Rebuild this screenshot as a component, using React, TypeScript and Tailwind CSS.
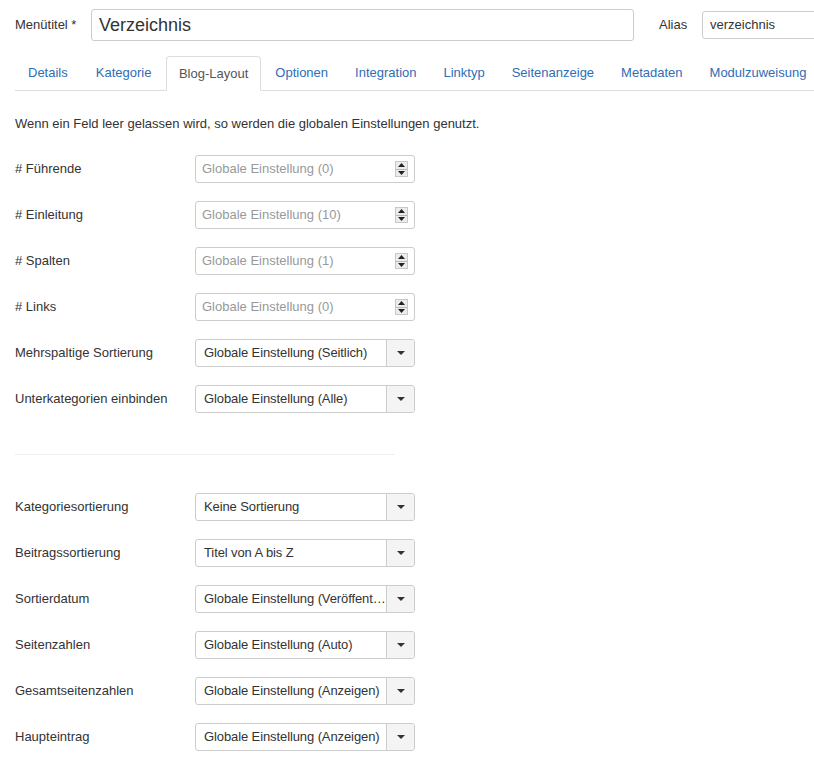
import React from "react";

const tabs = ["Details", "Kategorie", "Blog-Layout", "Optionen", "Integration", "Linktyp", "Seitenanzeige", "Metadaten", "Modulzuweisung"];

function Spinner() {
  return (
    <div className="flex flex-col w-[13px] h-[16px] border border-[#c8c8c8] bg-[#ececec] mr-[6px]">
      <div className="flex-1 flex items-center justify-center border-b border-[#b8b8b8]">
        <svg width="7" height="4" viewBox="0 0 7 4"><path d="M0 4 L3.5 0 L7 4 Z" fill="#222" /></svg>
      </div>
      <div className="flex-1 flex items-center justify-center">
        <svg width="7" height="4" viewBox="0 0 7 4"><path d="M0 0 L3.5 4 L7 0 Z" fill="#222" /></svg>
      </div>
    </div>
  );
}

function NumberField({ ph }: { ph: string }) {
  return (
    <div className="w-[220px] h-[28px] border border-[#ccc] rounded-[3px] flex items-center bg-white">
      <span className="flex-1 pl-[6px] text-[#999]">{ph}</span>
      <Spinner />
    </div>
  );
}

function SelectField({ value }: { value: string }) {
  return (
    <div className="w-[220px] h-[28px] border border-[#ccc] rounded-[3px] flex items-stretch bg-white">
      <span className="flex-1 min-w-0 pl-[8px] text-[#333] truncate leading-[26px] tracking-[-0.1px]">{value}</span>
      <div className="w-[28px] shrink-0 border-l border-[#ccc] bg-[#f4f4f4] flex items-center justify-center rounded-r-[3px]">
        <svg width="8" height="4" viewBox="0 0 8 4"><path d="M0 0 L8 0 L4 4 Z" fill="#333" /></svg>
      </div>
    </div>
  );
}

function Row({ label, children }: { label: string; children: React.ReactNode }) {
  return (
    <div className="flex items-center h-[28px] mb-[18px]">
      <div className="w-[180px] shrink-0 text-[#333]">{label}</div>
      {children}
    </div>
  );
}

export default function App() {
  return (
    <div className="w-[814px] h-[770px] overflow-hidden bg-white pl-[15px] pt-[9px] text-[13px] text-[#333]" style={{ fontFamily: '"Liberation Sans", Arial, sans-serif' }}>
      <div className="flex items-center">
        <div className="w-[76px] shrink-0 text-[#333]">Menütitel *</div>
        <div className="w-[543px] shrink-0 h-[32px] border border-[#ccc] rounded-[3px] flex items-center pl-[7px] text-[18px] text-[#333]">Verzeichnis</div>
        <div className="ml-[25px] w-[43px] shrink-0">Alias</div>
        <div className="w-[140px] shrink-0 h-[28px] border border-[#ccc] rounded-l-[3px] flex items-center pl-[7px]">verzeichnis</div>
      </div>

      <div className="mt-[15px] flex border-b border-[#ddd] h-[35px] whitespace-nowrap">
        {tabs.map((t, i) => (
          t === "Blog-Layout" ? (
            <div key={t} className="px-[11.5px] mr-[2px] -mb-px h-[35px] flex items-center border border-[#ddd] border-b-white rounded-t-[4px] bg-white text-[#555]">{t}</div>
          ) : i < 2 ? (
            <div key={t} className="px-[13px] mr-[2px] h-[34px] flex items-center text-[#2f6db5]">{t}</div>
          ) : (
            <div key={t} className="px-[12.5px] mr-[2px] h-[34px] flex items-center text-[#2f6db5]">{t}</div>
          )
        ))}
      </div>

      <p className="mt-[24px] mb-[22px] leading-[18px]">Wenn ein Feld leer gelassen wird, so werden die globalen Einstellungen genutzt.</p>

      <Row label="# Führende"><NumberField ph="Globale Einstellung (0)" /></Row>
      <Row label="# Einleitung"><NumberField ph="Globale Einstellung (10)" /></Row>
      <Row label="# Spalten"><NumberField ph="Globale Einstellung (1)" /></Row>
      <Row label="# Links"><NumberField ph="Globale Einstellung (0)" /></Row>
      <Row label="Mehrspaltige Sortierung"><SelectField value="Globale Einstellung (Seitlich)" /></Row>
      <Row label="Unterkategorien einbinden"><SelectField value="Globale Einstellung (Alle)" /></Row>

      <div className="w-[380px] h-px bg-[#eee] mt-[41px] mb-[38px]" />

      <Row label="Kategoriesortierung"><SelectField value="Keine Sortierung" /></Row>
      <Row label="Beitragssortierung"><SelectField value="Titel von A bis Z" /></Row>
      <Row label="Sortierdatum"><SelectField value="Globale Einstellung (Veröffentlicht)" /></Row>
      <Row label="Seitenzahlen"><SelectField value="Globale Einstellung (Auto)" /></Row>
      <Row label="Gesamtseitenzahlen"><SelectField value="Globale Einstellung (Anzeigen)" /></Row>
      <Row label="Haupteintrag"><SelectField value="Globale Einstellung (Anzeigen)" /></Row>
    </div>
  );
}
